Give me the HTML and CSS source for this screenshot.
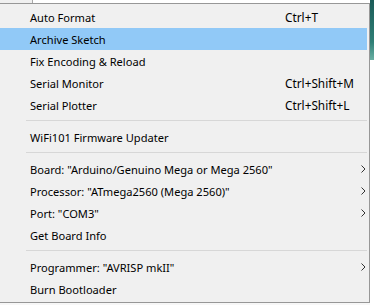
FILE: index.html
```html
<!DOCTYPE html>
<html>
<head>
<meta charset="utf-8">
<link rel="stylesheet" href="styles.css">
</head>
<body>
<div class="main">
  <div class="topstrip"><div class="tab"></div><div class="field"></div></div>
  <div class="menu">
    <div class="item"><span class="label">Auto Format</span><span class="key">Ctrl+T</span></div>
    <div class="item active"><span class="label">Archive Sketch</span></div>
    <div class="item"><span class="label">Fix Encoding &amp; Reload</span></div>
    <div class="item"><span class="label">Serial Monitor</span><span class="key">Ctrl+Shift+M</span></div>
    <div class="item"><span class="label">Serial Plotter</span><span class="key">Ctrl+Shift+L</span></div>
    <div class="sep"></div>
    <div class="item"><span class="label">WiFi101 Firmware Updater</span></div>
    <div class="sep"></div>
    <div class="item"><span class="label">Board: "Arduino/Genuino Mega or Mega 2560"</span><svg class="arrow" width="5" height="8" viewBox="0 0 5 8"><path d="M0.5 0.5 L4 4 L0.5 7.5" fill="none" stroke="#333" stroke-width="1"/></svg></div>
    <div class="item"><span class="label">Processor: "ATmega2560 (Mega 2560)"</span><svg class="arrow" width="5" height="8" viewBox="0 0 5 8"><path d="M0.5 0.5 L4 4 L0.5 7.5" fill="none" stroke="#333" stroke-width="1"/></svg></div>
    <div class="item"><span class="label">Port: "COM3"</span><svg class="arrow" width="5" height="8" viewBox="0 0 5 8"><path d="M0.5 0.5 L4 4 L0.5 7.5" fill="none" stroke="#333" stroke-width="1"/></svg></div>
    <div class="item"><span class="label">Get Board Info</span></div>
    <div class="sep"></div>
    <div class="item"><span class="label">Programmer: "AVRISP mkII"</span><svg class="arrow" width="5" height="8" viewBox="0 0 5 8"><path d="M0.5 0.5 L4 4 L0.5 7.5" fill="none" stroke="#333" stroke-width="1"/></svg></div>
    <div class="item"><span class="label">Burn Bootloader</span></div>
  </div>
  <div class="below"></div>
</div>
<div class="side"><div class="teal"></div></div>
</body>
</html>
```
FILE: styles.css
```css
html, body {
  margin: 0;
  padding: 0;
}
body {
  width: 374px;
  height: 305px;
  overflow: hidden;
  display: flex;
  background: #ffffff;
  font-family: "Noto Sans", "Open Sans", sans-serif;
  font-size: 11.1px;
  color: #000;
}
.main {
  width: 370px;
  display: flex;
  flex-direction: column;
}
.topstrip {
  height: 3px;
  display: flex;
}
.tab {
  width: 32px;
  background: #f0f0f0;
  border-right: 1px solid #a8a8a8;
}
.field {
  flex: 1;
  background: #ffffff;
}
.menu {
  background: #f0f0f0;
  border-top: 1px solid #979797;
  border-right: 1px solid #979797;
  border-bottom: 1px solid #979797;
  padding: 2px 2px 2px 0;
}
.item {
  height: 22px;
  display: flex;
  align-items: center;
  padding-left: 30px;
  position: relative;
  white-space: nowrap;
}
.item.active {
  background: #91c9f7;
}
.label {
  width: 255px;
  flex: none;
}
.key {
  flex: none;
  font-size: 11.8px;
}
.arrow {
  position: absolute;
  left: 361px;
  top: 7px;
}
.sep {
  height: 1px;
  background: #d7d7d7;
  margin: 4px 0 5px 26px;
}
.below {
  flex: 1;
  background: #f7f7f7;
}
.side {
  flex: 1;
  display: flex;
  flex-direction: column;
}
.teal {
  height: 60px;
  background: linear-gradient(#1b5c58, #2f7f76 70%, #69b0a3);
}
```
